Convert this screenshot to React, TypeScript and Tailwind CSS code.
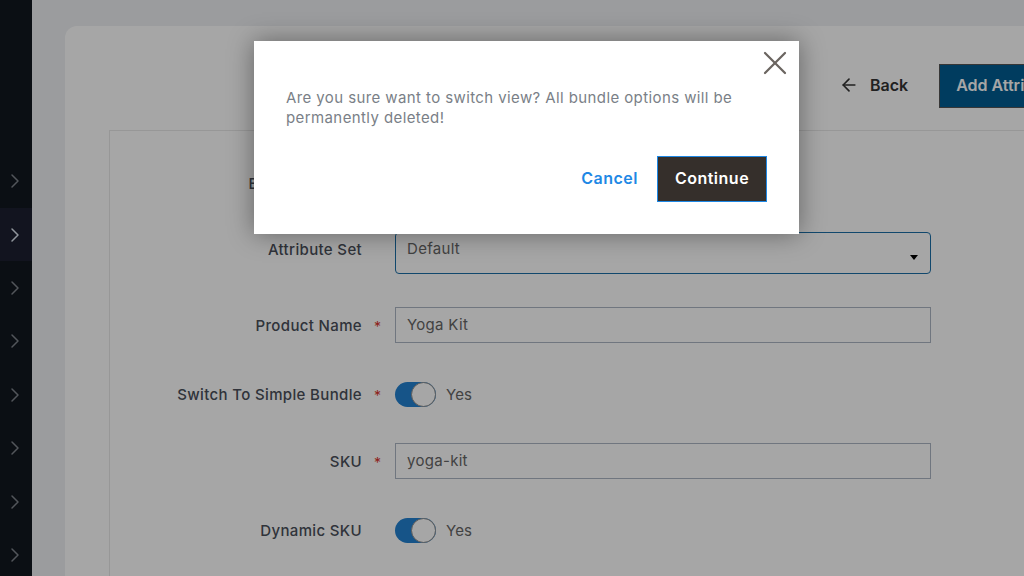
import { ArrowLeft, ChevronRight, X } from 'lucide-react';

const navItems = [0, 1, 2, 3, 4, 5, 6, 7];

const Toggle = () => (
  <div className="flex items-center gap-[10px]">
    <div className="w-[41px] h-[25px] rounded-full bg-[#2281d1] flex justify-end">
      <div className="w-[25px] h-[25px] rounded-full bg-white border border-[#8d8d8d]" />
    </div>
    <span className="text-[15px] text-[#666] tracking-[0.1px] pt-[1px]">Yes</span>
  </div>
);

const Label = ({ text, required, top }: { text: string; required?: boolean; top?: boolean }) => (
  <div className={`w-[285px] shrink-0 flex justify-end ${top ? 'items-start pt-[7px]' : 'items-center pt-[2px]'}`}>
    <span className="text-[15px] font-medium tracking-[0.35px] text-[#4a4f5a] whitespace-nowrap">{text}</span>
    <span className="w-[33px] pl-[12px] text-[14px] text-[#d9342b]">{required ? '*' : ''}</span>
  </div>
);

export default function App() {
  return (
    <div className="relative h-[576px] w-[1024px] overflow-hidden bg-[#eef0f3] flex font-['Inter','Liberation_Sans',sans-serif]">
      {/* Sidebar */}
      <div className="w-[32px] shrink-0 bg-[#12171f] pt-[154.6px] flex flex-col">
        {navItems.map((i) => (
          <div key={i} className={`h-[53.4px] shrink-0 flex items-center justify-center pr-[2px] ${i === 1 ? 'bg-[#1c2030]' : ''}`}>
            <ChevronRight size={24} strokeWidth={1.5} className={i === 1 ? 'text-[#dfe6f0]' : 'text-[#7f858c]'} />
          </div>
        ))}
      </div>

      {/* Main */}
      <div className="flex-1 pl-[33px] pt-[26px]">
        <div className="w-[1100px] h-[700px] bg-white rounded-tl-[12px] pl-[44px]">
          <div className="h-[104px] w-[915px] pt-[38px] flex justify-start pl-[730px] gap-[31px]">
            <div className="flex items-center gap-[11px] h-[44px] pb-[2px] text-[#333]">
              <ArrowLeft size={20} strokeWidth={2} />
              <span className="text-[16px] font-semibold">Back</span>
            </div>
            <div className="h-[44px] w-[200px] shrink-0 bg-[#005c92] border border-[#555] pl-[16px] pb-[2px] flex items-center">
              <span className="text-[16px] font-semibold text-white whitespace-nowrap">Add Attribute</span>
            </div>
          </div>
          <div className="border border-[#e8e8e8] h-[600px] flex flex-col">
            <div className="h-[101px] flex items-start pt-[40px]">
              <Label text="Enable Product" />
            </div>
            <div className="flex">
              <Label text="Attribute Set" top />
              <div className="relative w-[536px] h-[42px] rounded-[4px] border border-[#1b6fa8] pl-[11px] pt-[5px] text-[15px] tracking-[0.3px] text-[#666]">
                Default
                <span className="absolute right-[12px] top-[22px] w-0 h-0 border-x-[4px] border-x-transparent border-t-[5px] border-t-black" />
              </div>
            </div>
            <div className="flex mt-[33px]">
              <Label text="Product Name" required />
              <div className="w-[536px] h-[36px] border border-[#adb5c4] pl-[11px] flex items-center text-[15px] tracking-[0.3px] text-[#666]">Yoga Kit</div>
            </div>
            <div className="flex mt-[39px] h-[25px]">
              <Label text="Switch To Simple Bundle" required />
              <Toggle />
            </div>
            <div className="flex mt-[36px]">
              <Label text="SKU" required />
              <div className="w-[536px] h-[36px] border border-[#adb5c4] pl-[11px] flex items-center text-[15px] tracking-[0.3px] text-[#666]">yoga-kit</div>
            </div>
            <div className="flex mt-[39px] h-[25px]">
              <Label text="Dynamic SKU" />
              <Toggle />
            </div>
          </div>
        </div>
      </div>

      {/* Overlay */}
      <div className="absolute inset-0 bg-black/35" />

      {/* Dialog */}
      <div className="absolute left-[254px] top-[41px] w-[545px] h-[193px] bg-white shadow-[0_0_24px_rgba(0,0,0,0.4)] px-[32px] pt-[47px]">
        <X size={40} strokeWidth={1.35} className="absolute right-[4px] top-[2px] text-[#6b6560]" />
        <p className="text-[15px] leading-[20px] tracking-[0.4px] text-[#7a7f87]">
          Are you sure want to switch view? All bundle options will be permanently deleted!
        </p>
        <div className="flex justify-end items-center gap-[19px] mt-[28px]">
          <span className="text-[16px] font-semibold tracking-[0.5px] text-[#1e88e5] pb-[2px]">Cancel</span>
          <div className="w-[110px] h-[46px] bg-[#352f2b] border border-[#1e88e5] pb-[2px] flex items-center justify-center text-[16px] font-semibold tracking-[0.5px] text-white">
            Continue
          </div>
        </div>
      </div>
    </div>
  );
}
